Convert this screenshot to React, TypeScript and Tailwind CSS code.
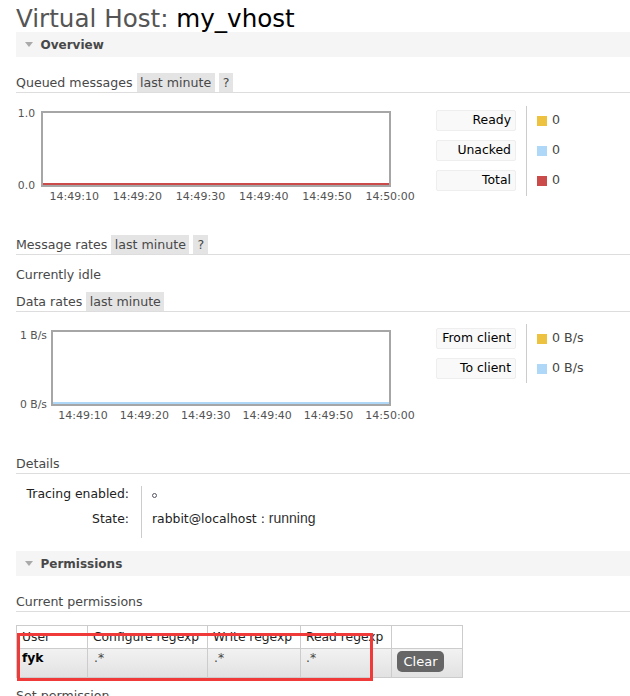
import React from 'react'

const times = ['14:49:10', '14:49:20', '14:49:30', '14:49:40', '14:49:50', '14:50:00']

function SectionBar({ title }: { title: string }) {
  return (
    <div className="flex h-[25px] items-center bg-[#f5f5f5] pl-[9px]">
      <span className="h-0 w-0 border-x-[4.5px] border-t-[5px] border-x-transparent border-t-[#aaa]" />
      <span className="ml-[7.5px] text-[12px] font-bold text-[#484848]">{title}</span>
    </div>
  )
}

function Heading({ children, className = '' }: { children: React.ReactNode; className?: string }) {
  return (
    <div className={`flex h-[20px] items-start border-b border-[#ddd] leading-[19px] ${className}`}>
      {children}
    </div>
  )
}

function Badge({ children, className = '' }: { children: React.ReactNode; className?: string }) {
  return <span className={`ml-[4px] h-[19px] bg-[#e4e4e4] leading-[19px] ${className}`}>{children}</span>
}

function LegendLabel({ children }: { children: React.ReactNode }) {
  return (
    <div className="flex h-[21px] w-[80px] items-center justify-end rounded-[2px] border border-[#eee] bg-[#f9f9f9] pr-[4px] text-[12.4px] text-black">
      {children}
    </div>
  )
}

function LegendValue({ color, value }: { color: string; value: string }) {
  return (
    <div className="flex h-[21px] items-center">
      <span className="h-[10px] w-[10px]" style={{ background: color }} />
      <span className="ml-[5px] text-[12.6px] text-[#444]">{value}</span>
    </div>
  )
}

export default function App() {
  return (
    <div className="h-[696px] w-[630px] overflow-hidden bg-white pl-[16px] font-['DejaVu_Sans',Verdana,sans-serif] text-[12.6px] text-[#484848]">
      {/* Title */}
      <h1 className="h-[32px] whitespace-nowrap pt-[5px] text-[24.6px] leading-[27px] text-[#555]">
        Virtual Host: <span className="text-black">my_vhost</span>
      </h1>

      <SectionBar title="Overview" />

      {/* Queued messages */}
      <Heading className="mt-[16px]">
        <span>Queued messages</span>
        <Badge className="px-[3.5px]">last minute</Badge>
        <Badge className="px-[4px]">?</Badge>
      </Heading>

      <div className="mt-[12px] flex">
        <div className="flex w-[420px] flex-col">
          <div className="flex items-start">
            <div className="mt-[2px] flex h-[85px] w-[25px] flex-col justify-between pr-[6px] text-right text-[10.8px] leading-[13px] text-[#545454]">
              <span>1.0</span>
              <span>0.0</span>
            </div>
            <div className="mt-[6px] flex h-[76px] w-[350px] flex-col justify-end border-2 border-[#a6a6a6] bg-white">
              <div className="h-[2px] bg-[#cb4b4b]" />
            </div>
          </div>
          <div className="-mt-[2px] flex pl-[26.6px] text-[11px] leading-[13px] text-[#545454]">
            {times.map((t) => (
              <span key={t} className="w-[63.2px] shrink-0 text-center">
                {t}
              </span>
            ))}
          </div>
        </div>
        <div className="mt-[1px] flex h-[90px]">
          <div className="flex flex-col gap-[9px] border-r border-[#ccc] py-[4px] pr-[10px]">
            <LegendLabel>Ready</LegendLabel>
            <LegendLabel>Unacked</LegendLabel>
            <LegendLabel>Total</LegendLabel>
          </div>
          <div className="flex flex-col gap-[9px] py-[4px] pl-[10px]">
            <LegendValue color="#edc240" value="0" />
            <LegendValue color="#afd8f8" value="0" />
            <LegendValue color="#cb4b4b" value="0" />
          </div>
        </div>
      </div>

      {/* Message rates */}
      <Heading className="mt-[32px]">
        <span>Message rates</span>
        <Badge className="px-[3.5px]">last minute</Badge>
        <Badge className="px-[4px]">?</Badge>
      </Heading>
      <p className="mt-[10px] leading-[19px]">Currently idle</p>

      {/* Data rates */}
      <Heading className="mt-[8px]">
        <span>Data rates</span>
        <Badge className="px-[3.5px]">last minute</Badge>
      </Heading>

      <div className="mt-[12px] flex">
        <div className="flex w-[420px] flex-col">
          <div className="flex items-start">
            <div className="mt-[5px] flex h-[82px] w-[35px] flex-col justify-between pr-[4px] text-right text-[10.8px] leading-[13px] text-[#545454]">
              <span>1 B/s</span>
              <span>0 B/s</span>
            </div>
            <div className="mt-[6px] flex h-[76px] w-[340px] flex-col justify-end border-2 border-[#a6a6a6] bg-white">
              <div className="h-[2px] bg-[#afd8f8]" />
            </div>
          </div>
          <div className="-mt-[2px] flex pl-[36.3px] text-[11px] leading-[13px] text-[#545454]">
            {times.map((t) => (
              <span key={t} className="w-[61.4px] shrink-0 text-center">
                {t}
              </span>
            ))}
          </div>
        </div>
        <div className="flex h-[59px]">
          <div className="flex flex-col gap-[9px] border-r border-[#ccc] py-[4px] pr-[10px]">
            <LegendLabel>From client</LegendLabel>
            <LegendLabel>To client</LegendLabel>
          </div>
          <div className="flex flex-col gap-[9px] py-[4px] pl-[10px]">
            <LegendValue color="#edc240" value="0 B/s" />
            <LegendValue color="#afd8f8" value="0 B/s" />
          </div>
        </div>
      </div>

      {/* Details */}
      <Heading className="mt-[32px]">
        <span>Details</span>
      </Heading>
      <div className="mt-[12px] grid w-fit grid-cols-[125px_auto] text-[12.4px] leading-[15px] text-[#222]">
        <div className="h-[25px] pr-[12px] text-right">Tracing enabled:</div>
        <div className="h-[25px] border-l border-[#ccc] pl-[10px]">
          <span className="mt-[6px] inline-block h-[5px] w-[5px] rounded-full border border-[#556]" />
        </div>
        <div className="h-[27px] pr-[12px] text-right">State:</div>
        <div className="h-[27px] border-l border-[#ccc] pl-[10px]">
          rabbit@localhost :{' '}
          <span className="font-['Liberation_Sans',Arial,sans-serif] text-[14px] text-[#333]">running</span>
        </div>
      </div>

      <div className="mt-[13px]">
        <SectionBar title="Permissions" />
      </div>

      <Heading className="mt-[16px]">
        <span>Current permissions</span>
      </Heading>

      {/* Permissions table */}
      <div className="relative mt-[13px] w-fit">
        <div className="grid grid-cols-[71px_120px_93px_91px_71px] border-l border-t border-[#ccc] text-[12.3px] leading-[15px] text-[#222]">
          {['User', 'Configure regexp', 'Write regexp', 'Read regexp', ''].map((h, i) => (
            <div key={i} className="h-[23px] overflow-visible whitespace-nowrap border-b border-r border-[#ccc] bg-white px-[5px] pt-[4px]">
              {h}
            </div>
          ))}
          <div className="h-[29px] border-b border-r border-[#ccc] bg-gradient-to-b from-[#f2f2f2] to-[#e2e2e2] px-[5px] pt-[2px] font-bold text-black">
            fyk
          </div>
          <div className="h-[29px] border-b border-r border-[#ccc] bg-gradient-to-b from-[#f2f2f2] to-[#e2e2e2] px-[6px] pt-[2px] text-[#444]">
            .*
          </div>
          <div className="h-[29px] border-b border-r border-[#ccc] bg-gradient-to-b from-[#f2f2f2] to-[#e2e2e2] px-[6px] pt-[2px] text-[#444]">
            .*
          </div>
          <div className="h-[29px] border-b border-r border-[#ccc] bg-gradient-to-b from-[#f2f2f2] to-[#e2e2e2] px-[5px] pt-[2px] text-[#444]">
            .*
          </div>
          <div className="h-[29px] border-b border-r border-[#ccc] bg-gradient-to-b from-[#f2f2f2] to-[#e2e2e2] pl-[5px] pt-[2px]">
            <button className="flex h-[21px] w-[47px] items-center justify-center rounded-[5px] bg-[#666] text-[13px] text-white">
              Clear
            </button>
          </div>
        </div>
        {/* annotation box */}
        <div className="pointer-events-none absolute left-[1px] top-[8px] h-[48px] w-[356px] border-[3px] border-[#f03a3a]" />
      </div>

      <Heading className="mt-[8px]">
        <span>Set permission</span>
      </Heading>
    </div>
  )
}
